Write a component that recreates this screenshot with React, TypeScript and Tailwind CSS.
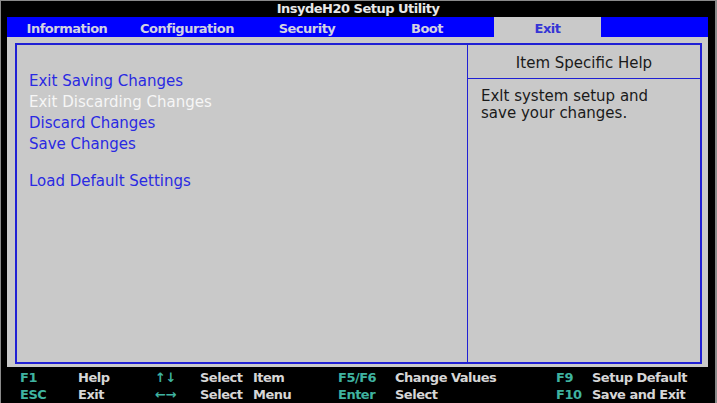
import React from "react";

const tabs = ["Information", "Configuration", "Security", "Boot", "Exit"];

const bold = "font-['DejaVu_Sans',sans-serif] font-bold text-[13px] tracking-[-0.5px]";

export default function App() {
  return (
    <div className="w-[717px] h-[403px] bg-black border-l border-t border-r-2 border-[#8a8a8a] flex flex-col overflow-hidden">
      {/* Title */}
      <div className={`h-[16px] leading-[16px] text-center text-[#e8e8e8] ${bold}`}>
        InsydeH20 Setup Utility
      </div>
      <div className="flex flex-col pl-[6px] pr-[7px]">
        {/* Tabs */}
        <div className="h-[20px] bg-[#0000ff] flex">
          {tabs.map((t) => (
            <div key={t} className="w-[120px] h-[20px] flex justify-start">
              {t === "Exit" ? (
                <div className={`ml-[7px] w-[107px] h-[20px] bg-[#c9c9c9] text-center pt-[3px] leading-[17px] text-[#3535d5] ${bold}`}>
                  {t}
                </div>
              ) : (
                <div className={`w-[120px] h-[20px] text-center pt-[3px] leading-[17px] text-[#d2d2e2] ${bold}`}>
                  {t}
                </div>
              )}
            </div>
          ))}
        </div>
        {/* Body */}
        <div className="h-[330px] bg-[#c9c9c9] pl-[8px] pt-[6px] pr-[6px] pb-[3px] flex">
          <div className="flex-1 border-2 border-[#2020d4] flex font-['DejaVu_Sans',sans-serif] text-[15px]">
            <div className="w-[451px] border-r border-[#2020d4] pl-[12px] pt-[26px] flex flex-col leading-[21px] text-[#2a2ae2]">
              <div>Exit Saving Changes</div>
              <div className="text-[#f6f6f6]">Exit Discarding Changes</div>
              <div>Discard Changes</div>
              <div>Save Changes</div>
              <div className="mt-[16px]">Load Default Settings</div>
            </div>
            <div className="flex-1 flex flex-col text-[#1a1a1a]">
              <div className="h-[34px] border-b border-[#2020d4] pt-[10px] leading-[17px] text-center">
                Item Specific Help
              </div>
              <div className="pl-[13px] pt-[9px] leading-[17px]">
                <div>Exlt system setup and</div>
                <div>save your changes.</div>
              </div>
            </div>
          </div>
        </div>
      </div>
      {/* Footer */}
      <div className={`pl-[19px] pt-[2px] leading-[17px] ${bold} grid grid-cols-[58px_77px_45px_53px_85px_57px_161px_36px_1fr]`}>
        <div className="text-[#3fb3a0]">F1</div>
        <div className="text-[#d6d6d6]">Help</div>
        <div className="text-[#3fb3a0]">↑↓</div>
        <div className="text-[#d6d6d6]">Select</div>
        <div className="text-[#d6d6d6]">Item</div>
        <div className="text-[#3fb3a0]">F5/F6</div>
        <div className="text-[#d6d6d6]">Change Values</div>
        <div className="text-[#3fb3a0]">F9</div>
        <div className="text-[#d6d6d6]">Setup Default</div>

        <div className="text-[#3fb3a0]">ESC</div>
        <div className="text-[#d6d6d6]">Exit</div>
        <div className="text-[#3fb3a0]">←→</div>
        <div className="text-[#d6d6d6]">Select</div>
        <div className="text-[#d6d6d6]">Menu</div>
        <div className="text-[#3fb3a0]">Enter</div>
        <div className="text-[#d6d6d6]">Select</div>
        <div className="text-[#3fb3a0]">F10</div>
        <div className="text-[#d6d6d6]">Save and Exit</div>
      </div>
    </div>
  );
}
